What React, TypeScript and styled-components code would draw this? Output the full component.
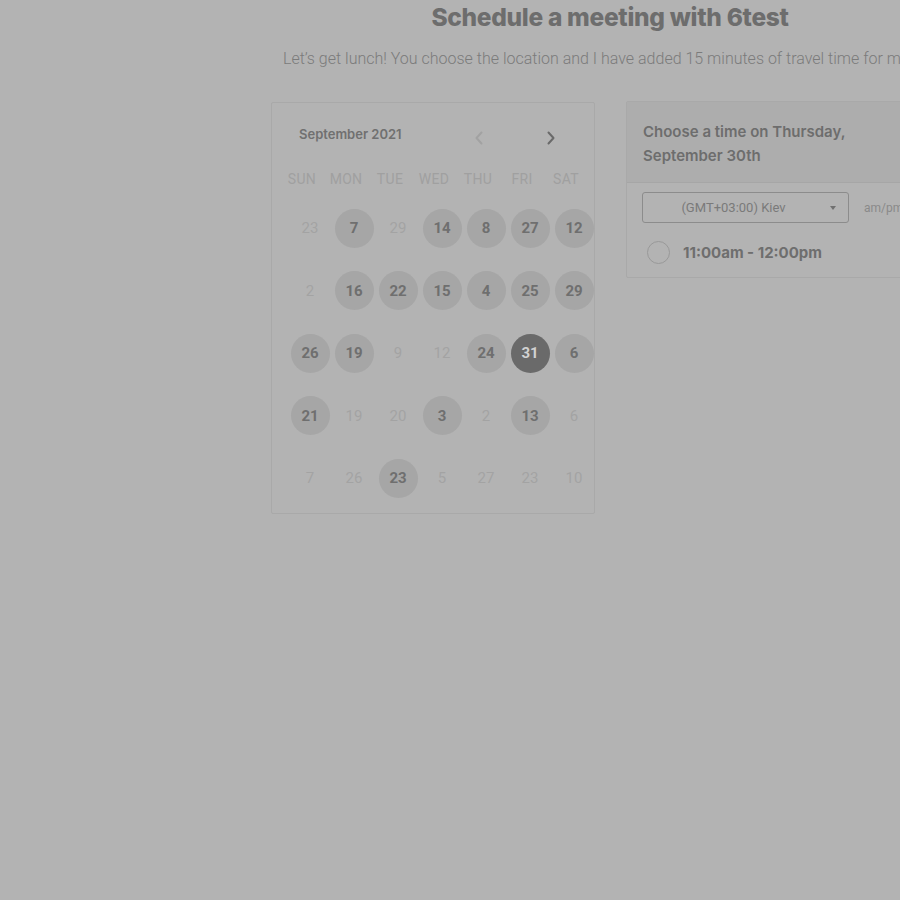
import React from 'react';
import styled, { createGlobalStyle } from 'styled-components';

type DayKind = 'faint' | 'open' | 'selected';

type Day = {
  n: number;
  kind: DayKind;
};

const GlobalStyle = createGlobalStyle`
  html, body {
    margin: 0;
    padding: 0;
    background: #b3b3b3;
    overflow: hidden;
    width: 900px;
    height: 900px;
  }
  * {
    box-sizing: border-box;
  }
`;

const Page = styled.div`
  width: 680px;
  margin-left: 270px;
  display: flex;
  flex-direction: column;
  align-items: center;
`;

const Title = styled.h1`
  margin: 2px 0 0 0;
  font-family: Inter, 'Noto Sans', sans-serif;
  font-weight: 800;
  font-size: 24.5px;
  letter-spacing: -0.3px;
  line-height: 30px;
  color: #6d6d6d;
`;

const Subtitle = styled.p`
  align-self: flex-start;
  margin: 17px 0 0 13px;
  font-family: Roboto, 'Liberation Sans', sans-serif;
  font-weight: 300;
  font-size: 16px;
  line-height: 20px;
  color: #7b7b7b;
  white-space: nowrap;
`;

const Columns = styled.div`
  align-self: flex-start;
  display: flex;
  align-items: flex-start;
  gap: 31px;
  margin: 33px 0 0 1px;
`;

const CalendarCard = styled.div`
  width: 324px;
  height: 412px;
  border: 1px solid #a9a9a9;
  border-radius: 2px;
  padding: 20px 0 0 0;
`;

const MonthBar = styled.div`
  display: flex;
  align-items: center;
  padding: 0 0 0 27px;
  height: 22px;
`;

const MonthLabel = styled.span`
  font-family: Inter, 'Noto Sans', sans-serif;
  font-weight: 600;
  font-size: 13px;
  color: #707070;
  width: 170px;
`;

const Arrow = styled.span<{ $dim?: boolean }>`
  display: flex;
  align-items: center;
  justify-content: center;
  width: 20px;
  height: 20px;
  margin-top: 8px;
  color: ${(p) => (p.$dim ? '#a2a2a2' : '#6a6a6a')};
`;

const ArrowGap = styled.span`
  width: 52px;
`;

const WeekRow = styled.div`
  display: grid;
  grid-template-columns: repeat(7, 44px);
  padding-left: 8px;
  margin-top: 26px;
`;

const WeekDay = styled.span`
  text-align: center;
  font-family: Roboto, 'Liberation Sans', sans-serif;
  font-size: 14px;
  letter-spacing: 0.3px;
  color: #a0a0a0;
`;

const DayGrid = styled.div`
  display: grid;
  grid-template-columns: repeat(7, 44px);
  grid-auto-rows: 62.5px;
  padding-left: 16px;
  margin-top: 10px;
  width: 330px;
`;

const Cell = styled.div`
  display: flex;
  align-items: center;
  justify-content: center;
`;

const DayBubble = styled.div<{ $kind: DayKind }>`
  width: 39px;
  height: 39px;
  border-radius: 50%;
  display: flex;
  align-items: center;
  justify-content: center;
  font-family: Roboto, 'Liberation Sans', sans-serif;
  font-size: 15px;
  font-weight: ${(p) => (p.$kind === 'faint' ? 400 : 700)};
  color: ${(p) =>
    p.$kind === 'faint' ? '#a3a3a3' : p.$kind === 'selected' ? '#d2d2d2' : '#6f6f6f'};
  background: ${(p) =>
    p.$kind === 'faint' ? 'transparent' : p.$kind === 'selected' ? '#6a6a6a' : '#a6a6a6'};
`;

const TimeCard = styled.div`
  width: 330px;
  border: 1px solid #a9a9a9;
  border-radius: 2px;
  margin-top: -1px;
`;

const TimeHeader = styled.div`
  background: #adadad;
  padding: 18px 16px 14px 16px;
  border-bottom: 1px solid #a6a6a6;
  font-family: Inter, 'Noto Sans', sans-serif;
  font-weight: 600;
  font-size: 15px;
  line-height: 24px;
  color: #6d6d6d;
`;

const ControlRow = styled.div`
  display: flex;
  align-items: center;
  gap: 15px;
  padding: 9px 0 0 15px;
`;

const ZoneSelect = styled.div`
  position: relative;
  width: 207px;
  height: 31px;
  border: 1px solid #8c8c8c;
  border-radius: 3px;
  display: flex;
  align-items: center;
  justify-content: center;
  padding-right: 24px;
  font-family: Roboto, 'Liberation Sans', sans-serif;
  font-size: 13px;
  color: #7a7a7a;
`;

const Caret = styled.span`
  position: absolute;
  right: 12px;
  top: 13px;
  width: 0;
  height: 0;
  border-left: 3.5px solid transparent;
  border-right: 3.5px solid transparent;
  border-top: 4px solid #707070;
`;

const Format = styled.span`
  font-family: Roboto, 'Liberation Sans', sans-serif;
  font-size: 12px;
  color: #8a8a8a;
`;

const Slot = styled.div`
  display: flex;
  align-items: center;
  gap: 13px;
  padding: 18px 0 13px 20px;
`;

const Radio = styled.span`
  width: 23px;
  height: 23px;
  border-radius: 50%;
  border: 1.5px solid #999999;
`;

const SlotLabel = styled.span`
  font-family: Inter, 'Noto Sans', sans-serif;
  font-weight: 700;
  font-size: 15px;
  color: #6e6e6e;
`;

const f = (n: number): Day => ({ n, kind: 'faint' });
const o = (n: number): Day => ({ n, kind: 'open' });

const days: Day[] = [
  f(23), o(7), f(29), o(14), o(8), o(27), o(12),
  f(2), o(16), o(22), o(15), o(4), o(25), o(29),
  o(26), o(19), f(9), f(12), o(24), { n: 31, kind: 'selected' }, o(6),
  o(21), f(19), f(20), o(3), f(2), o(13), f(6),
  f(7), f(26), o(23), f(5), f(27), f(23), f(10),
];

const weekDays = ['SUN', 'MON', 'TUE', 'WED', 'THU', 'FRI', 'SAT'];

function Chevron({ dir }: { dir: 'left' | 'right' }) {
  return (
    <svg width="10" height="14" viewBox="0 0 10 14" fill="none">
      <path
        d={dir === 'left' ? 'M7.5 1.5 L2.5 7 L7.5 12.5' : 'M2.5 1.5 L7.5 7 L2.5 12.5'}
        stroke="currentColor"
        strokeWidth="2"
        strokeLinecap="round"
        strokeLinejoin="round"
      />
    </svg>
  );
}

export default function App() {
  return (
    <>
      <GlobalStyle />
      <Page>
        <Title>Schedule a meeting with 6test</Title>
        <Subtitle>
          Let’s get lunch! You choose the location and I have added 15 minutes of travel time for me
        </Subtitle>
        <Columns>
          <CalendarCard>
            <MonthBar>
              <MonthLabel>September 2021</MonthLabel>
              <Arrow $dim>
                <Chevron dir="left" />
              </Arrow>
              <ArrowGap />
              <Arrow>
                <Chevron dir="right" />
              </Arrow>
            </MonthBar>
            <WeekRow>
              {weekDays.map((d) => (
                <WeekDay key={d}>{d}</WeekDay>
              ))}
            </WeekRow>
            <DayGrid>
              {days.map((d, i) => (
                <Cell key={i}>
                  <DayBubble $kind={d.kind}>{d.n}</DayBubble>
                </Cell>
              ))}
            </DayGrid>
          </CalendarCard>
          <TimeCard>
            <TimeHeader>
              Choose a time on Thursday,
              <br />
              September 30th
            </TimeHeader>
            <ControlRow>
              <ZoneSelect>
                (GMT+03:00) Kiev
                <Caret />
              </ZoneSelect>
              <Format>am/pm</Format>
            </ControlRow>
            <Slot>
              <Radio />
              <SlotLabel>11:00am - 12:00pm</SlotLabel>
            </Slot>
          </TimeCard>
        </Columns>
      </Page>
    </>
  );
}
